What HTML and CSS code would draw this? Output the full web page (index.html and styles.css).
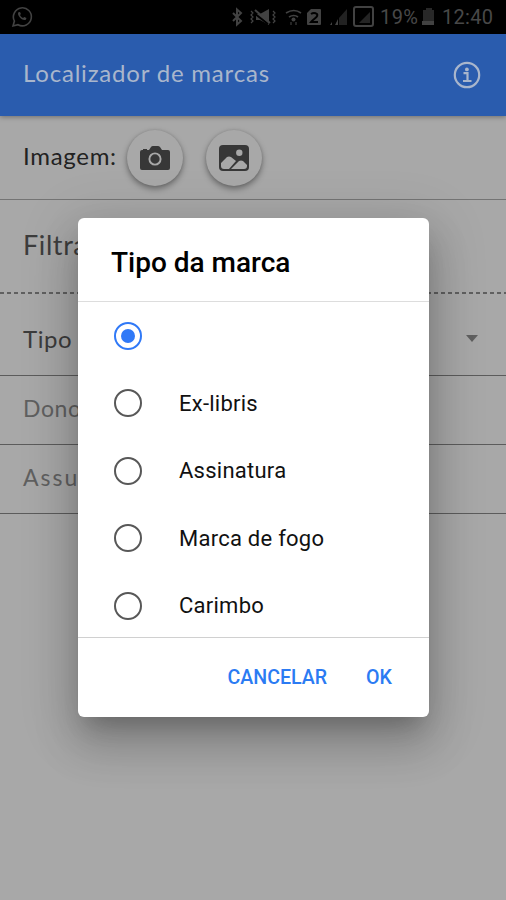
FILE: index.html
```html
<!DOCTYPE html>
<html lang="pt">
<head>
<meta charset="utf-8">
<title>Localizador de marcas</title>
<link rel="stylesheet" href="styles.css">
</head>
<body>
<div class="status">
  <svg class="whatsapp" width="22" height="22" viewBox="0 0 22 22" fill="none" stroke="currentColor" stroke-width="1.6"><path d="M2 20l1.4-5A9 9 0 1 1 7 18.7z"/><path d="M7.4 6.2c-2 2.5 4 9.3 7.4 7.5l.7-1.6-2.3-1.2-1.1 1.2c-1.5-.6-2.5-1.7-3.1-3l.9-1-.9-2.1z" fill="currentColor" stroke="none"/></svg>
  <svg width="262" height="24" viewBox="0 0 262 24" class="icons" fill="none" stroke="currentColor" stroke-width="2">
    <path d="M2 8l8 8-4 3.5v-15L10 8l-8 8"/>
    <path d="M20 6l2 2-2 2 2 2-2 2 2 2-2 2M42 6l2 2-2 2 2 2-2 2 2 2-2 2" stroke-width="1.2"/>
    <path d="M25 9h4l9-5v16l-9-5h-4z" fill="currentColor" stroke="none"/>
    <path d="M23 8l14 11" stroke="#000" stroke-width="2"/><path d="M24 5l15 13" stroke-width="2"/>
    <path d="M55 8q8-5 15 0M58 12q5-3 9 0" stroke-width="1.7"/><circle cx="62.500" cy="14.500" r="2" fill="currentColor" stroke="none"/><path d="M60 17v3M65 17v3" stroke-width="1.1"/>
    <path d="M80 4h9q1 0 1 1v14q0 1-1 1H77q-1 0-1-1V8z" fill="currentColor" stroke="none"/>
    <path d="M80 9q3-2 6 0c2 3-3 4-6 8h7" stroke="#000"/>
    <path d="M99 20h2v-3zM104 20h3v-6z" fill="currentColor" stroke="none"/><path d="M108 20h8V4l-8 9z" fill="#222" stroke="none"/>
    <rect x="123" y="2" width="19" height="19" rx="2"/><path d="M128 18h11V7z" fill="#242424" stroke="none"/>
    <path d="M192 5h3V3h6v2h2v15h-11z" fill="#282828" stroke="none"/><path d="M191 16h12v4h-12z" fill="currentColor" stroke="none"/>
    <text x="149" y="19" class="stat-text" textLength="38">19%</text>
    <text x="211" y="19" class="stat-text" textLength="51">12:40</text>
  </svg>
</div>
<header class="bar">
  <h1 class="bar-title">Localizador de marcas</h1>
  <svg width="28" height="28" viewBox="0 0 28 28" fill="none" stroke="currentColor" stroke-width="2.2"><circle cx="14" cy="14" r="12.2"/><path d="M10.500 12.200h4v7.500M10 20h8.500"/><circle cx="13.900" cy="8.400" r="1.900" fill="currentColor" stroke="none"/></svg>
</header>
<main>
  <section class="image-row">
    <span class="image-label">Imagem:</span>
    <button class="round" aria-label="Camera"><svg width="30" height="24" viewBox="0 0 30 24"><path fill="#373737" d="M2 4h1V3h4v1h2l2-3q.6-1 2-1h5q1 0 2 1l2 3h6q2 0 2 2v16q0 2-2 2H2q-2 0-2-2V6q0-2 2-2z"/><circle cx="15" cy="13" r="5.600" fill="#373737" stroke="#a8a8a8" stroke-width="1.900"/></svg></button>
    <button class="round" aria-label="Galeria"><svg width="30" height="26" viewBox="0 0 30 26"><rect width="30" height="26" rx="4" fill="#373737"/><circle cx="20.300" cy="7.800" r="3.200" fill="#a8a8a8"/><path fill="#a8a8a8" d="M2 18l6-6q2-1 4 0l5 4-7 8H5q-3 0-3-3zM12 24l8-8q2-1 4 0l4 4v1q0 3-3 3z"/></svg></button>
  </section>
  <section class="filter">Filtrar</section>
  <div class="dashes"></div>
  <section class="field type"><span>Tipo</span><span class="caret"></span></section>
  <section class="field owner">Dono</section>
  <section class="field subject">Assunto</section>
</main>
<div class="overlay">
  <div class="dialog" role="dialog">
    <h2 class="dialog-title">Tipo da marca</h2>
    <div class="options">
      <div class="option"><span class="radio checked"></span></div>
      <div class="option"><span class="radio"></span><span>Ex-libris</span></div>
      <div class="option"><span class="radio"></span><span>Assinatura</span></div>
      <div class="option"><span class="radio"></span><span>Marca de fogo</span></div>
      <div class="option"><span class="radio"></span><span>Carimbo</span></div>
    </div>
    <div class="actions"><span class="cancel">CANCELAR</span><span class="ok">OK</span></div>
  </div>
</div>
</body>
</html>
```
FILE: styles.css
```css
* { box-sizing: border-box; }
body { margin: 0; width: 506px; height: 900px; overflow: hidden; background: #a8a8a8; font-family: Lato, sans-serif; color: #222; }
.status { height: 34px; background: #000; color: #424242; display: flex; justify-content: space-between; align-items: center; padding: 0 13px 0 11px; }
.stat-text { font: 20px Roboto, sans-serif; fill: #484848; stroke: none; }
.bar { height: 82px; background: #2a5cae; color: #a9b6cc; display: flex; align-items: center; justify-content: space-between; padding: 0 25px 0 23px; box-shadow: 0 1px 5px rgba(0,0,0,.35); position: relative; }
.bar-title { margin: 0 0 5px; font-size: 24px; font-weight: 400; letter-spacing: .8px; }
.image-row { height: 84px; border-bottom: 1px solid #747474; display: flex; align-items: center; padding: 1px 0 0 23px; }
.image-label { width: 104px; font-size: 24px; letter-spacing: .7px; margin-bottom: 6px; }
.round { width: 56px; height: 56px; border: 0; padding: 0; border-radius: 50%; background: #a8a8a8; box-shadow: 0 3px 6px rgba(0,0,0,.38), 0 0 3px rgba(0,0,0,.12); display: flex; align-items: center; justify-content: center; margin-right: 23px; }
.filter { height: 92px; padding: 28px 23px; font-size: 27px; line-height: 34px; color: #3d3d3d; letter-spacing: .6px; }
.dashes { height: 2px; background: repeating-linear-gradient(90deg, #606060 0 4px, transparent 4px 7px); }
.field { height: 69px; border-bottom: 1px solid #5c5c5c; padding: 0 23px 4px; display: flex; align-items: center; justify-content: space-between; font-size: 24px; color: #606060; letter-spacing: .6px; }
.type { height: 82px; color: #3c3c3c; padding: 8px 23px 0; }
.owner, .subject { font-size: 23px; }
.subject { letter-spacing: 2px; padding-bottom: 5px; }
.caret { border: 6.5px solid transparent; border-top: 7px solid #606060; border-bottom: 0; margin-right: 5px; }
.overlay { position: absolute; inset: 0; display: flex; justify-content: center; align-items: flex-start; padding: 218px 77px 0 78px; }
.dialog { width: 351px; height: 499px; background: #fff; border-radius: 6px; overflow: hidden; box-shadow: 0 16px 22px -10px rgba(0,0,0,.22), 0 28px 44px 4px rgba(0,0,0,.14), 0 10px 52px 10px rgba(0,0,0,.13); font-family: Roboto, sans-serif; color: #111; display: flex; flex-direction: column; }
.dialog-title { margin: 0; height: 84px; padding: 27px 33px 0; font-size: 28px; line-height: 36px; font-weight: 500; border-bottom: 1px solid #ddd; white-space: nowrap; color: #000; }
.options { height: 336px; overflow: hidden; border-bottom: 1px solid #d0d0d0; }
.option { height: 67.5px; display: flex; align-items: center; padding-left: 36px; gap: 37px; font-size: 22px; letter-spacing: .25px; }
.radio { width: 28px; height: 28px; border: 2px solid #585858; border-radius: 50%; display: flex; align-items: center; justify-content: center; }
.checked { border-color: #3079f7; }
.checked::after { content: ""; width: 14px; height: 14px; border-radius: 50%; background: #3079f7; }
.actions { flex: 1; display: flex; align-items: center; justify-content: flex-end; gap: 39px; padding-right: 37px; font-size: 19.6px; font-weight: 500; color: #2b7bf3; }
```
